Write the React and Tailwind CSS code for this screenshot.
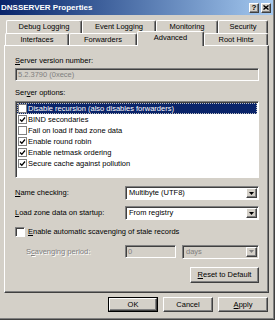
import React from 'react';

// Win2k-style bevels
const raised = 'border border-t-white border-l-white border-r-[#404040] border-b-[#404040] shadow-[inset_-1px_-1px_0_#808080]';
const sunken = 'border border-t-[#808080] border-l-[#808080] border-r-white border-b-white shadow-[inset_1px_1px_0_#404040]';

function Check({ checked, className = '' }) {
  return (
    <div className={`w-[9px] h-[9px] bg-white border border-[#808080] flex items-center justify-center shrink-0 ${className}`}>
      {checked && (
        <svg width="7" height="7" viewBox="0 0 7 7">
          <polyline points="1,3.5 2.8,5.3 6,1.5" fill="none" stroke="black" strokeWidth="1.3" />
        </svg>
      )}
    </div>
  );
}

function Arrow({ disabled }) {
  return (
    <div className={`w-[11px] h-[10px] ${raised} bg-[#d4d0c8] flex items-center justify-center shrink-0`}>
      <svg width="5" height="3" viewBox="0 0 5 3">
        <polygon points="0,0 5,0 2.5,3" fill={disabled ? '#808080' : 'black'} />
      </svg>
    </div>
  );
}

function Select({ value, width, disabled }) {
  return (
    <div className={`${width} h-[14px] ${sunken} ${disabled ? 'bg-[#d4d0c8] text-[#808080]' : 'bg-white'} flex items-center justify-between pl-[3px] pr-[1px]`}>
      <span className="leading-none">{value}</span>
      <Arrow disabled={disabled} />
    </div>
  );
}

function Tab({ label, width, active }) {
  return (
    <div
      className={`${width} flex items-center justify-center border-l border-t border-r border-l-white border-t-white border-r-[#404040] rounded-t-[2px] shadow-[inset_-1px_0_0_#808080] bg-[#d4d0c8] ${
        active ? 'h-[15px] relative z-10 -mb-px pb-[2px]' : 'h-full'
      }`}
    >
      {label}
    </div>
  );
}

export default function App() {
  const options = [
    { label: 'Disable recursion (also disables forwarders)', checked: false },
    { label: 'BIND secondaries', checked: true },
    { label: 'Fail on load if bad zone data', checked: false },
    { label: 'Enable round robin', checked: true },
    { label: 'Enable netmask ordering', checked: true },
    { label: 'Secure cache against pollution', checked: true },
  ];

  return (
    <div className="w-[275px] h-[320px] overflow-hidden bg-[#d4d0c8] border-r border-b border-r-[#404040] border-b-[#404040] shadow-[inset_-1px_-1px_0_#808080] font-['Liberation_Sans',Arial,sans-serif] text-[7.5px] text-black flex flex-col">
      {/* Title bar */}
      <div className="h-[15px] mr-[1px] bg-linear-to-r from-[#0a246a] to-[#a6caf0] flex items-center justify-between pl-[1px] pr-[2px] shrink-0">
        <span className="text-white font-bold text-[8px] leading-none">DNSSERVER Properties</span>
        <div className="flex gap-[2px]">
          <div className={`w-[10px] h-[10px] ${raised} bg-[#d4d0c8] flex items-center justify-center text-[8px] font-bold leading-none`}>?</div>
          <div className={`w-[10px] h-[10px] ${raised} bg-[#d4d0c8] flex items-center justify-center`}>
            <svg width="6" height="5" viewBox="0 0 6 5">
              <path d="M0.5 0.5 L5.5 4.5 M5.5 0.5 L0.5 4.5" stroke="black" strokeWidth="1.4" />
            </svg>
          </div>
        </div>
      </div>

      {/* Tabs */}
      <div className="mt-[5px] flex h-[13px] pl-[6px]">
        <Tab label="Debug Logging" width="w-[76px]" />
        <Tab label="Event Logging" width="w-[74px]" />
        <Tab label="Monitoring" width="w-[62px]" />
        <Tab label="Security" width="w-[50px]" />
      </div>
      <div className="flex h-[12px] items-end pl-[5px]">
        <Tab label="Interfaces" width="w-[64px]" />
        <Tab label="Forwarders" width="w-[68px]" />
        <Tab label="Advanced" width="w-[67px]" active />
        <Tab label="Root Hints" width="w-[64px]" />
      </div>

      {/* Panel */}
      <div className="ml-[4px] w-[265px] h-[248px] border border-t-white border-l-white border-r-[#404040] border-b-[#404040] shadow-[inset_-1px_-1px_0_#808080] pl-[10px] flex flex-col shrink-0">
        <div className="mt-[11px] leading-[8px]"><u>S</u>erver version number:</div>
        <div className={`mt-[3px] w-[244px] h-[13px] ${sunken} flex items-center pl-[2px] text-[#808080]`}>5.2.3790 (0xece)</div>

        <div className="mt-[8px] leading-[8px]">Ser<u>v</u>er options:</div>
        <div className={`mt-[4px] w-[244px] h-[77px] ${sunken} bg-white py-px pl-px pr-px flex flex-col`}>
          {options.map((o, i) => (
            <div
              key={i}
              className={`h-[11px] flex items-center gap-[1px] pl-[1px] ${i === 0 ? 'bg-[#0a246a] text-white outline-1 outline-dotted outline-[#c0c0c0] -outline-offset-1' : ''}`}
            >
              <Check checked={o.checked} />
              <span className="leading-none">{o.label}</span>
            </div>
          ))}
        </div>

        <div className="mt-[8px] w-[244px] flex items-center justify-between">
          <span><u>N</u>ame checking:</span>
          <Select value="Multibyte (UTF8)" width="w-[134px]" />
        </div>
        <div className="mt-[6px] w-[244px] flex items-center justify-between">
          <span><u>L</u>oad zone data on startup:</span>
          <Select value="From registry" width="w-[134px]" />
        </div>

        <div className="mt-[6px] h-[11px] flex items-center gap-[3px]">
          <div className={`w-[10px] h-[10px] ${sunken} bg-white`} />
          <span><u>E</u>nable automatic scavenging of stale records</span>
        </div>

        <div className="mt-[8px] w-[244px] h-[13px] flex items-center">
          <span className="w-[110px] pl-[11px] text-[#808080] [text-shadow:1px_1px_0_#ffffff]">S<u>c</u>avenging period:</span>
          <div className={`w-[51px] h-[13px] ${sunken} flex items-center pl-[2px] text-[#808080]`}>0</div>
          <div className="ml-[6px]">
            <Select value="days" width="w-[77px]" disabled />
          </div>
        </div>

        <div className="mt-[9px] w-[244px] flex justify-end">
          <div className={`w-[69px] h-[16px] ${raised} flex items-center justify-center`}>
            <span><u>R</u>eset to Default</span>
          </div>
        </div>
      </div>

      {/* Dialog buttons */}
      <div className="mt-[4px] flex justify-end gap-[5px] pr-[6px]">
        <div className="w-[50px] h-[15px] border border-black flex">
          <div className={`flex-1 ${raised} flex items-center justify-center`}>OK</div>
        </div>
        <div className={`w-[50px] h-[15px] ${raised} flex items-center justify-center`}>Cancel</div>
        <div className={`w-[50px] h-[15px] ${raised} flex items-center justify-center`}>
          <span><u>A</u>pply</span>
        </div>
      </div>
    </div>
  );
}
